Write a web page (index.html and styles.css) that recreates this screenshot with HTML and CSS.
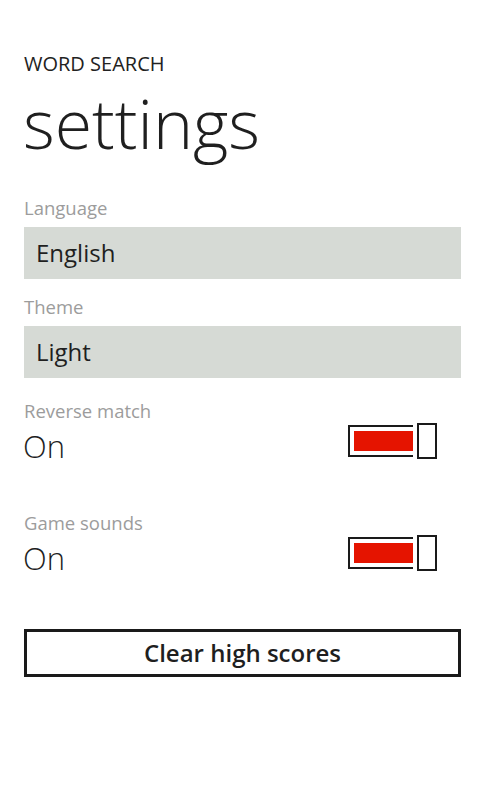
FILE: index.html
```html
<!DOCTYPE html>
<html>
<head>
<meta charset="utf-8">
<link rel="stylesheet" href="styles.css">
</head>
<body>
<div class="page">
  <header class="header">
    <div class="app-title">WORD SEARCH</div>
    <h1 class="page-title">settings</h1>
  </header>
  <section class="field">
    <div class="label">Language</div>
    <div class="picker">English</div>
  </section>
  <section class="field">
    <div class="label">Theme</div>
    <div class="picker">Light</div>
  </section>
  <section class="toggle-row">
    <div class="toggle-text">
      <div class="label">Reverse match</div>
      <div class="state">On</div>
    </div>
    <div class="switch">
      <div class="track"><div class="fill"></div></div>
      <div class="thumb"></div>
    </div>
  </section>
  <section class="toggle-row">
    <div class="toggle-text">
      <div class="label">Game sounds</div>
      <div class="state">On</div>
    </div>
    <div class="switch">
      <div class="track"><div class="fill"></div></div>
      <div class="thumb"></div>
    </div>
  </section>
  <button class="action">Clear high scores</button>
</div>
</body>
</html>
```

FILE: styles.css
```css
html, body {
  margin: 0;
  padding: 0;
  background: #ffffff;
}
body {
  font-family: "Open Sans", "Noto Sans", "Liberation Sans", sans-serif;
  color: #1f1f1f;
}
.page {
  padding: 0 25px 0 24px;
  display: flex;
  flex-direction: column;
}
.header {
  padding-top: 53px;
  margin-bottom: 25px;
}
.app-title {
  font-size: 20px;
  line-height: 22px;
  color: #222;
}
.page-title {
  margin: 1px 0 0 -1px;
  font-weight: 300;
  font-size: 68px;
  line-height: 93px;
  color: #1f1f1f;
}
.field {
  display: flex;
  flex-direction: column;
  margin-bottom: 14px;
}
.label {
  font-size: 18.5px;
  line-height: 27px;
  color: #9c9c9c;
}
.picker {
  margin-top: 6px;
  height: 52px;
  background: #d6dad5;
  font-size: 24px;
  line-height: 52px;
  padding-left: 12px;
  color: #1f1f1f;
}
.field + .field {
  margin-bottom: 19px;
}
.toggle-row {
  display: flex;
  justify-content: space-between;
  align-items: flex-start;
  height: 112px;
  padding-right: 24px;
}
.state {
  font-size: 31px;
  font-weight: 300;
  line-height: 40px;
  margin-top: 2px;
  margin-left: -1px;
}
.switch {
  display: flex;
  align-items: center;
  gap: 4px;
  margin-top: 26px;
}
.track {
  width: 59px;
  height: 20px;
  border: 2px solid #1a1a1a;
  border-right: none;
  padding: 4px 0 4px 4px;
}
.fill {
  height: 20px;
  background: #e51400;
}
.thumb {
  width: 16px;
  height: 32px;
  border: 2px solid #1a1a1a;
  background: #fff;
}
.action {
  margin-top: 8px;
  height: 48px;
  border: 3px solid #1a1a1a;
  background: #fff;
  font-family: "Open Sans", "Noto Sans", sans-serif;
  font-size: 24px;
  font-weight: 600;
  line-height: 40px;
  color: #1f1f1f;
  padding: 0;
}
```
